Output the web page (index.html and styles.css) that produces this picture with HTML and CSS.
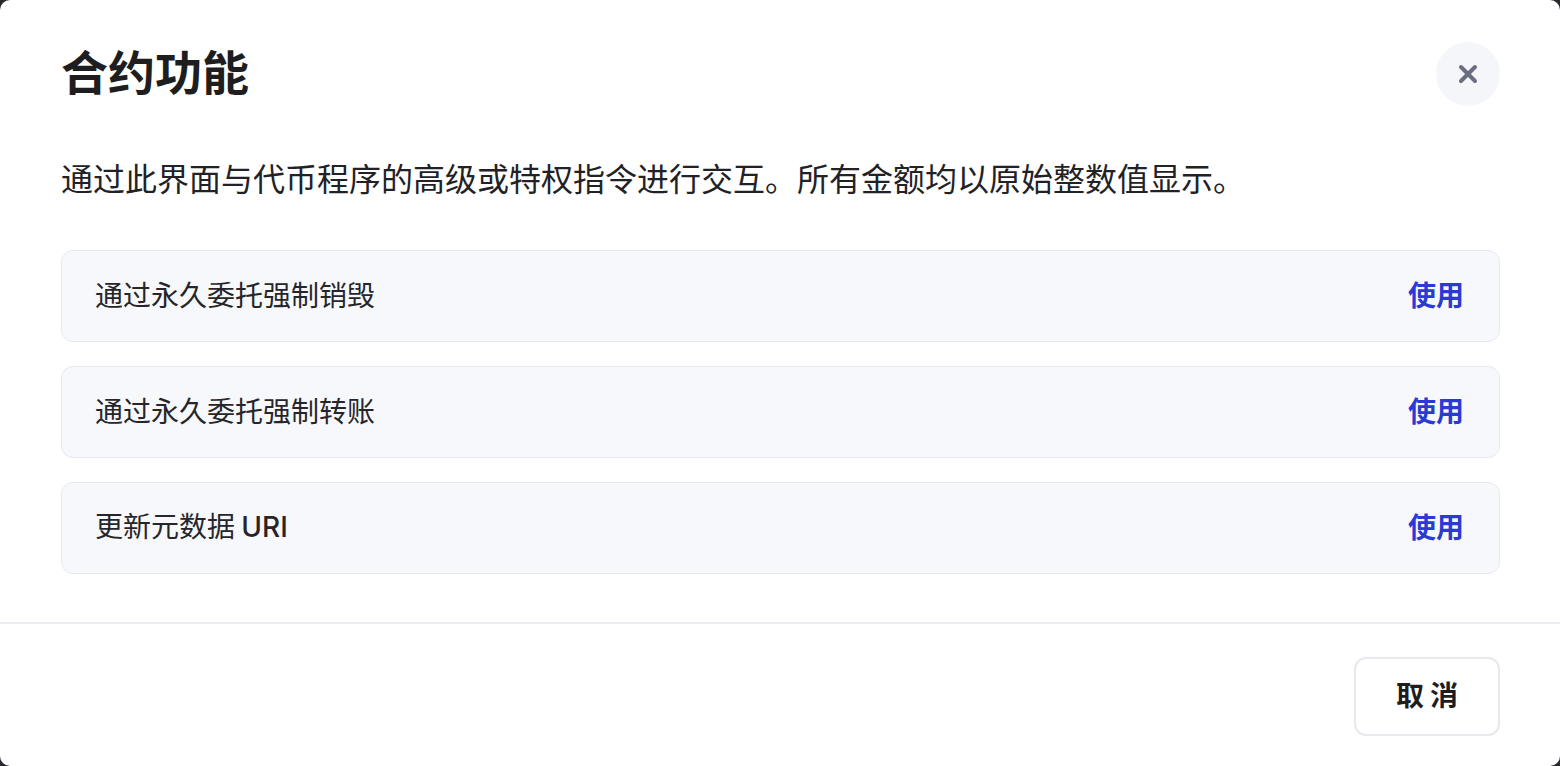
FILE: index.html
```html
<!DOCTYPE html>
<html lang="zh-CN">
<head>
<meta charset="utf-8">
<title>合约功能</title>
<link rel="stylesheet" href="styles.css">
</head>
<body>
<div class="modal">
  <div class="modal-header">
    <h1 class="modal-title">合约功能</h1>
    <button class="close-btn" aria-label="关闭">
      <svg width="20" height="20" viewBox="0 0 20 20"><path d="M3 3 L17 17 M17 3 L3 17" stroke="#6b6e80" stroke-width="4" stroke-linecap="round" fill="none"/></svg>
    </button>
  </div>
  <div class="modal-body">
    <p class="desc">通过此界面与代币程序的高级或特权指令进行交互。所有金额均以原始整数值显示。</p>
    <div class="fn-list">
      <div class="fn-row"><span class="fn-name">通过永久委托强制销毁</span><span class="fn-use">使用</span></div>
      <div class="fn-row"><span class="fn-name">通过永久委托强制转账</span><span class="fn-use">使用</span></div>
      <div class="fn-row"><span class="fn-name">更新元数据 <span class="latin">URI</span></span><span class="fn-use">使用</span></div>
    </div>
  </div>
  <div class="modal-footer">
    <button class="cancel-btn">取消</button>
  </div>
</div>
</body>
</html>
```
FILE: styles.css
```css
html, body {
  margin: 0;
  padding: 0;
  background: #2a2a2e;
}
body {
  font-family: "Noto Sans CJK SC", "Noto Sans", sans-serif;
  color: #222226;
}
.modal {
  box-sizing: border-box;
  width: 1560px;
  height: 766px;
  background: #ffffff;
  border-radius: 10px;
  display: flex;
  flex-direction: column;
  overflow: hidden;
}
.modal-header {
  display: flex;
  justify-content: space-between;
  align-items: center;
  padding: 42px 60px 0 61px;
}
.modal-title {
  margin: 0;
  padding-bottom: 8px;
  font-size: 47px;
  line-height: 56px;
  font-weight: 700;
  color: #1e1e21;
}
.close-btn {
  width: 64px;
  height: 64px;
  border-radius: 50%;
  border: none;
  background: #f5f6fa;
  display: flex;
  align-items: center;
  justify-content: center;
  padding: 0;
}
.modal-body {
  flex: 1;
  padding: 0 60px 0 61px;
}
.desc {
  margin: 47px 0 49px;
  font-size: 32px;
  line-height: 48px;
  color: #222226;
}
.fn-list {
  display: flex;
  flex-direction: column;
  gap: 24px;
}
.fn-row {
  box-sizing: border-box;
  height: 92px;
  display: flex;
  align-items: center;
  justify-content: space-between;
  padding: 0 35px 4px 33px;
  background: #f7f8fc;
  border: 1px solid #e8e9ef;
  border-radius: 12px;
}
.fn-name {
  font-size: 28px;
  line-height: 40px;
  color: #26262a;
}
.latin {
  font-family: "Inter", "Noto Sans", sans-serif;
  font-weight: 500;
}
.fn-use {
  font-size: 28px;
  line-height: 40px;
  font-weight: 700;
  color: #2b3ad4;
}
.modal-footer {
  border-top: 2px solid #ececf0;
  padding: 33px 60px 30px;
  display: flex;
  justify-content: flex-end;
}
.cancel-btn {
  box-sizing: border-box;
  width: 146px;
  height: 79px;
  background: #ffffff;
  border: 2px solid #e8e8ee;
  border-radius: 12px;
  font-family: "Noto Sans CJK SC", sans-serif;
  font-size: 28px;
  font-weight: 700;
  color: #1e1e21;
  letter-spacing: 6px;
  padding: 0 0 5px 6px;
}
```
